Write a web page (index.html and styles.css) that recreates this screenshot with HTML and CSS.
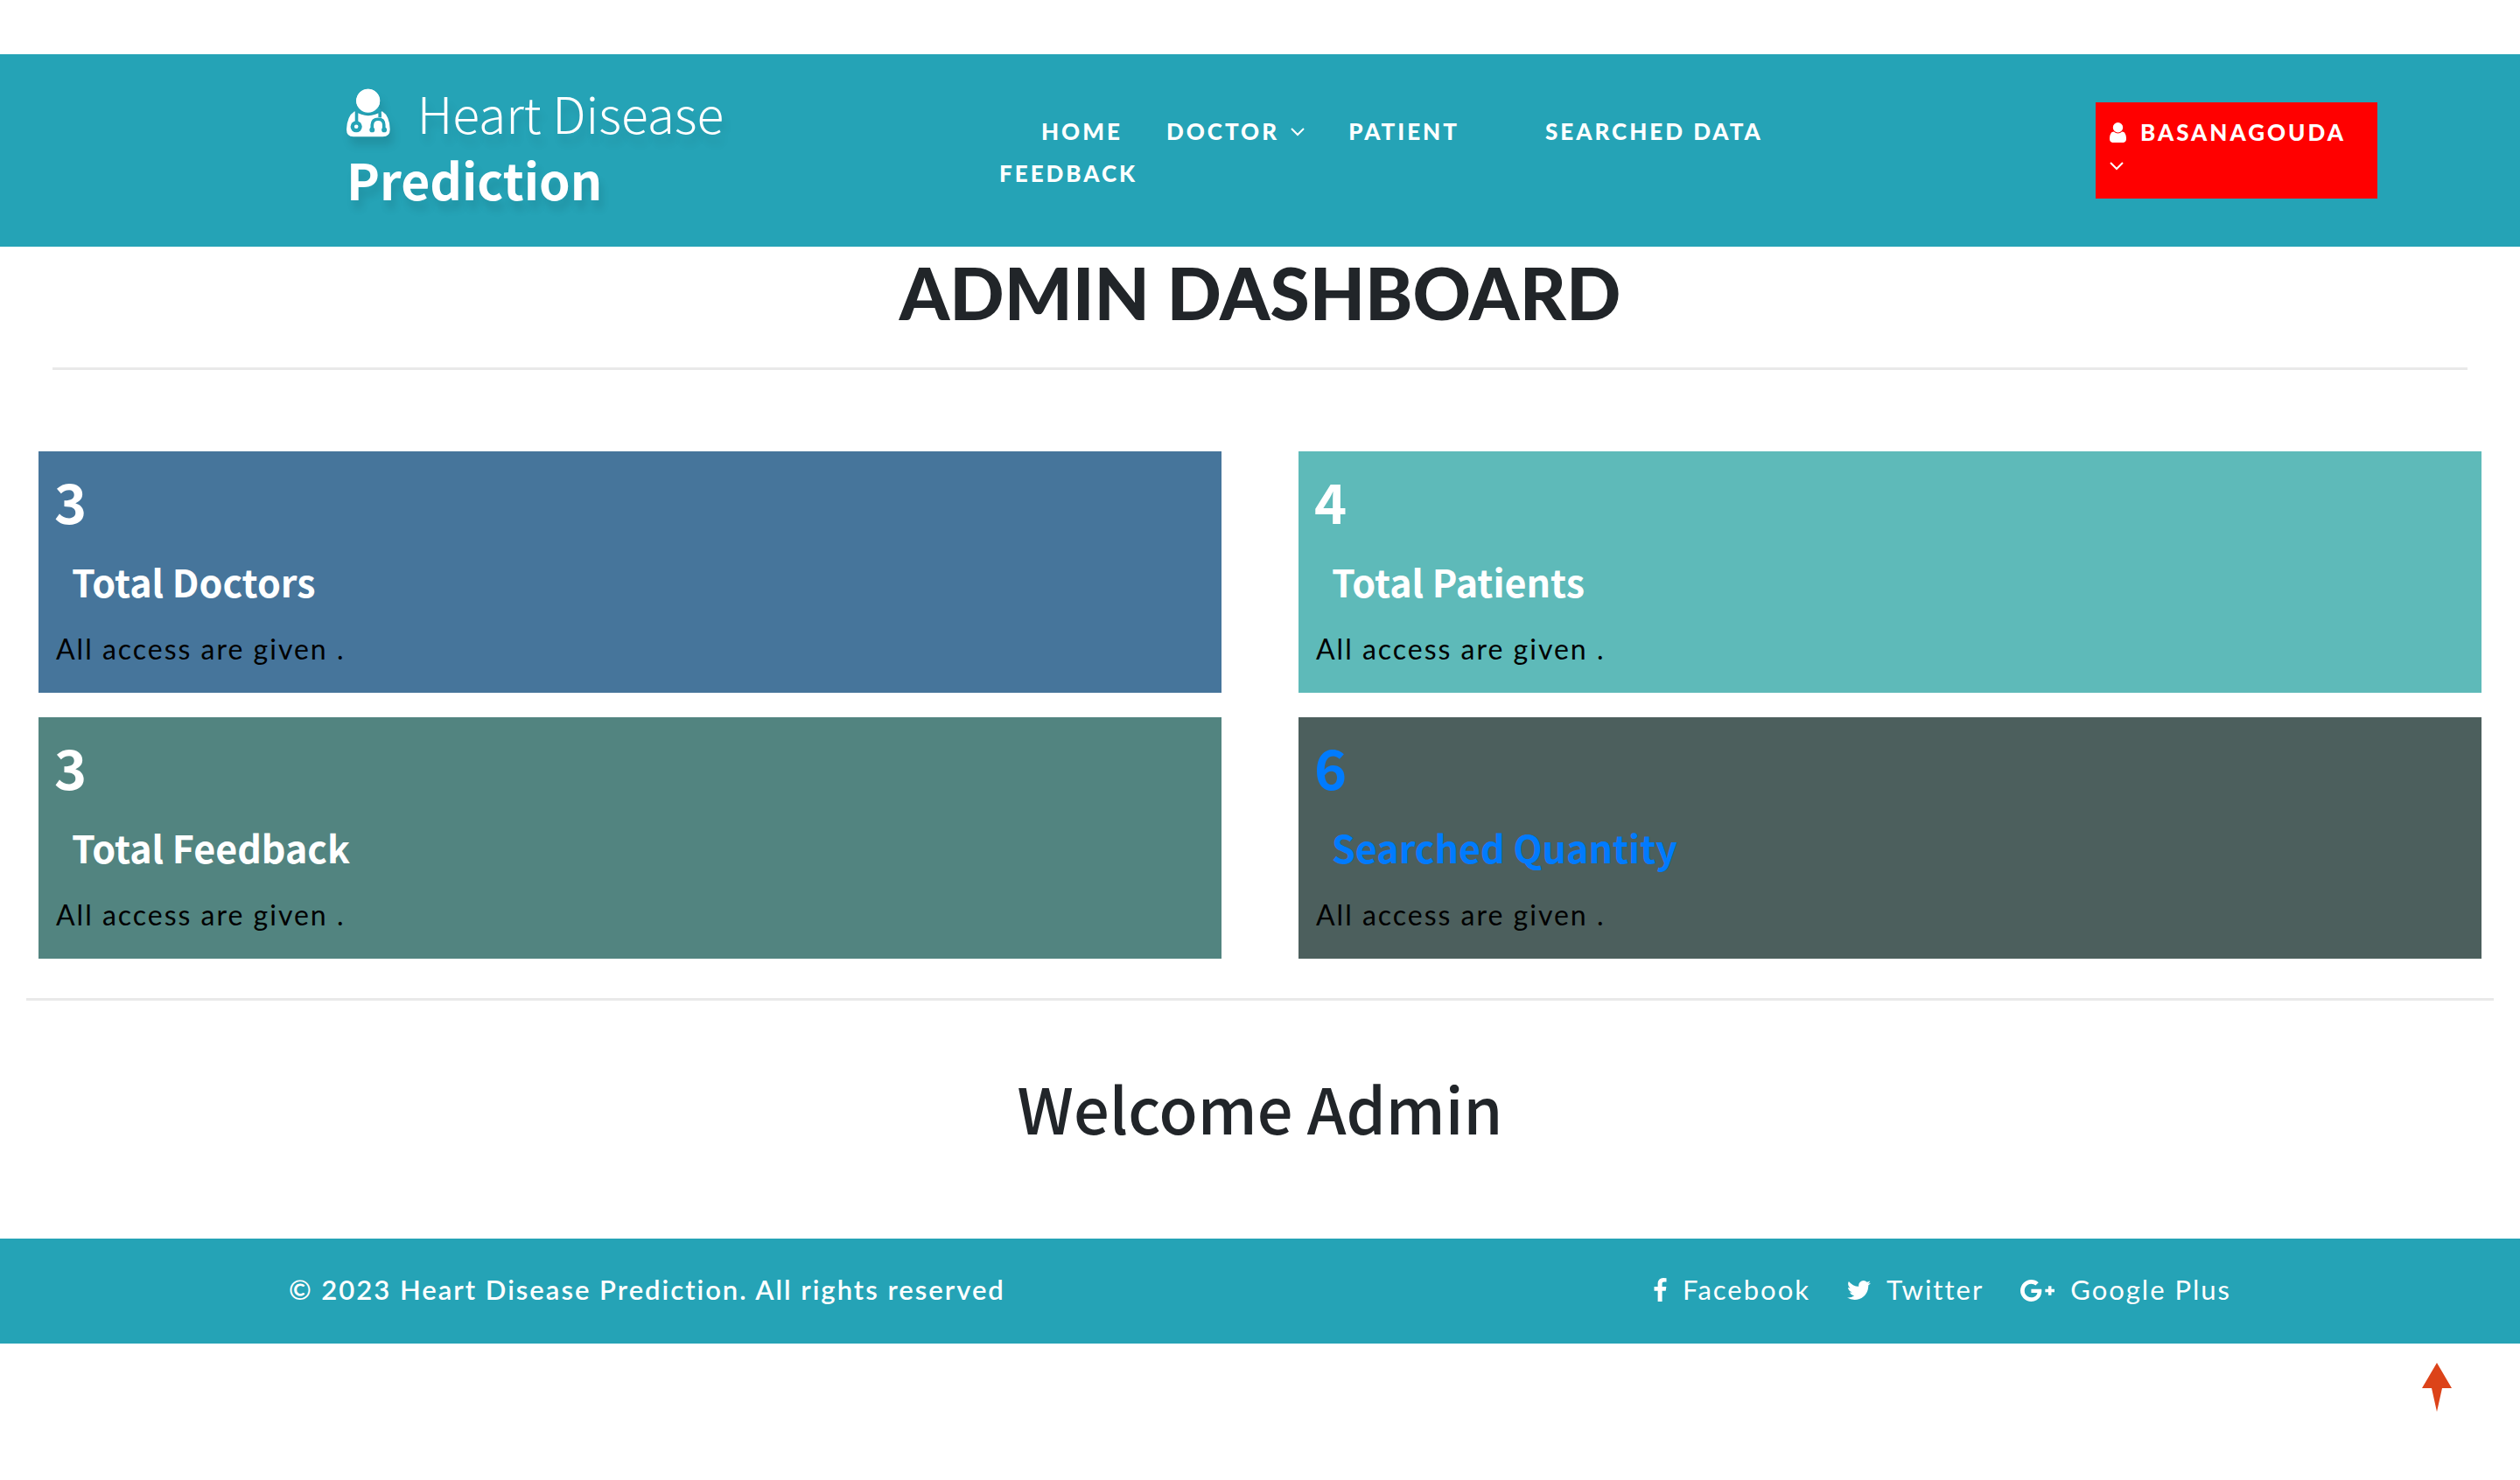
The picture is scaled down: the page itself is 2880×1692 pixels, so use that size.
FILE: index.html
```html
<!DOCTYPE html>
<html lang="en">
<head>
<meta charset="utf-8">
<meta name="viewport" content="width=device-width, initial-scale=1">
<title>Heart Disease Prediction - Admin</title>
<link rel="stylesheet" href="styles.css">
</head>
<body>
<header class="site-header">
  <a class="logo" href="#">
    <svg class="logo-icon" viewBox="0 0 152 168" aria-hidden="true">
      <circle cx="75" cy="42" r="41" fill="#fff"/>
      <path d="M28 79Q75 108 124 79Q150 95 151 142Q151 167 126 167H24Q0 167 0 142Q2 95 28 79Z" fill="#fff"/>
      <path d="M30 74Q75 106 121 74L108 60H42Z" fill="#25a3b6"/>
      <circle cx="75" cy="42" r="41" fill="#fff"/>
      <g fill="none" stroke="#25a3b6" stroke-width="11">
        <path d="M35 78V116M115 78Q117 92 116 100M89 142V126Q90 106 110 106Q130 106 130 126V142"/>
      </g>
      <g fill="#25a3b6"><circle cx="34" cy="132" r="20"/><circle cx="89" cy="143" r="9"/><circle cx="131" cy="143" r="9"/></g>
      <circle cx="34" cy="132" r="7" fill="#fff"/>
    </svg>
    <span class="logo-light">Heart Disease</span>
    <strong class="logo-bold">Prediction</strong>
  </a>
  <nav class="main-nav">
    <a class="nav-home" href="#">Home</a>
    <a class="nav-doctor" href="#">Doctor <svg class="chevron" viewBox="0 0 16 10" aria-hidden="true"><path d="M1 1l7 7 7-7"/></svg></a>
    <a class="nav-patient" href="#">Patient</a>
    <a href="#">Searched Data</a>
    <a href="#">Feedback</a>
  </nav>
  <button class="user-menu" type="button">
    <span class="user-name"><svg class="user-icon" viewBox="256 128 1280 1536" aria-hidden="true"><path d="M1536 1399q0 109-62.5 187t-150.5 78h-854q-88 0-150.5-78t-62.5-187q0-85 8.5-160.5t31.5-152 58.5-131 94-89 134.5-34.5q131 128 313 128t313-128q76 0 134.5 34.5t94 89 58.5 131 31.5 152 8.5 160.5zm-256-887q0 159-112.5 271.5t-271.5 112.5-271.5-112.5-112.5-271.5 112.5-271.5 271.5-112.5 271.5 112.5 112.5 271.5z"/></svg>Basanagouda</span>
    <svg class="chevron" viewBox="0 0 16 10" aria-hidden="true"><path d="M1 1l7 7 7-7"/></svg>
  </button>
</header>

<main>
  <h1 class="page-title">ADMIN DASHBOARD</h1>
  <hr class="rule rule-inset">
  <section class="cards">
    <article class="card card-doctors">
      <h2 class="card-count">3</h2>
      <h3 class="card-label">Total Doctors</h3>
      <p class="card-note">All access are given .</p>
    </article>
    <article class="card card-patients">
      <h2 class="card-count">4</h2>
      <h3 class="card-label">Total Patients</h3>
      <p class="card-note">All access are given .</p>
    </article>
    <article class="card card-feedback">
      <h2 class="card-count">3</h2>
      <h3 class="card-label">Total Feedback</h3>
      <p class="card-note">All access are given .</p>
    </article>
    <article class="card card-searched">
      <h2 class="card-count"><a href="#">6</a></h2>
      <h3 class="card-label"><a href="#">Searched Quantity</a></h3>
      <p class="card-note">All access are given .</p>
    </article>
  </section>
  <hr class="rule">
  <h2 class="welcome">Welcome Admin</h2>
</main>

<footer class="site-footer">
  <div class="footer-inner">
    <p class="copyright">© 2023 Heart Disease Prediction. All rights reserved</p>
    <div class="social">
      <a href="#"><svg class="icon-facebook" viewBox="479 0 864 1664" aria-hidden="true"><path d="M1343 12v264h-157q-86 0-116 36t-30 108v189h293l-39 296h-254v759h-306v-759h-255v-296h255v-218q0-186 104-288.5t277-102.5q147 0 228 12z"/></svg>Facebook</a>
      <a href="#"><svg class="icon-twitter" viewBox="108 256 1576 1280" aria-hidden="true"><path d="M1684 408q-67 98-162 167 1 14 1 42 0 130-38 259.5t-115.5 248.5-184.5 210.5-258 146-323 54.5q-271 0-496-145 35 4 78 4 225 0 401-138-105-2-188-64.5t-114-159.5q33 5 61 5 43 0 85-11-112-23-185.5-111.5t-73.5-205.5v-4q68 38 146 41-66-44-105-115t-39-154q0-88 44-163 121 149 294.5 238.5t371.5 99.5q-8-38-8-74 0-134 94.5-228.5t228.5-94.5q140 0 236 102 109-21 205-78-37 115-142 178 93-10 186-50z"/></svg>Twitter</a>
      <a href="#"><svg class="icon-google" viewBox="0 163 2304 1466" aria-hidden="true"><path d="M1437 913q0 208-87 370.5t-248 254-369 91.5q-149 0-285-58t-234-156-156-234-58-285 58-285 156-234 234-156 285-58q286 0 491 192l-199 191q-117-113-292-113-123 0-227.5 62t-165.5 168.5-61 232.5 61 232.5 165.5 168.5 227.5 62q83 0 152.5-23t114.5-57.5 78.5-78.5 49-83 21.5-74h-416v-252h692q12 63 12 122zm867-122v210h-209v209h-210v-209h-209v-210h209v-209h210v209h209z"/></svg>Google Plus</a>
    </div>
  </div>
</footer>
<a class="to-top" href="#" aria-label="Back to top"><svg viewBox="0 0 34 56" aria-hidden="true"><path d="M17 0L34 29H23L17 56L11 29H0Z"/></svg></a>
</body>
</html>
```
FILE: styles.css
```css
* { box-sizing: border-box; }

body {
  margin: 0;
  padding-top: 62px;
  background: #fff;
  color: #212529;
  font: 32px/48px Lato, sans-serif;
  letter-spacing: 2px;
}

h1, h2, h3, p { margin: 0; }
a { color: inherit; text-decoration: none; }
svg { fill: currentColor; }

.site-header {
  display: grid;
  grid-template-columns: 494fr 1001fr 322px;
  column-gap: 252px;
  align-items: start;
  min-height: 220px;
  padding: 28px 163px 30px 396px;
  background: #25a3b6;
  color: #fff;
}

.logo {
  font: 57px/76px "Noto Sans CJK SC", "Noto Sans", sans-serif;
  letter-spacing: 0;
  text-shadow: 4px 10px 10px rgba(0, 0, 0, .1);
}
.logo-icon {
  width: 50px;
  height: 56px;
  margin-right: 18px;
  vertical-align: -4px;
  filter: drop-shadow(4px 10px 5px rgba(0, 0, 0, .1));
}
.logo-light { font-weight: 300; }
.logo-bold { display: block; font-weight: 700; }

.main-nav {
  display: flex;
  flex-wrap: wrap;
  column-gap: 50px;
  padding-top: 36px;
  font-size: 26px;
  font-weight: 900;
  letter-spacing: 3px;
  text-transform: uppercase;
}
.nav-home { margin-left: 48px; }
.nav-patient { margin-right: 48px; }

.chevron {
  width: 16px;
  height: 10px;
  fill: none;
  stroke: currentColor;
  stroke-width: 2;
}
.main-nav .chevron { margin-left: 4px; vertical-align: 4px; }

.user-menu {
  display: flex;
  flex-direction: column;
  align-items: flex-start;
  height: 110px;
  margin-top: 27px;
  padding: 14px 16px;
  border: 0;
  background: #f00;
  color: #fff;
  font: 900 26px/40px Lato, sans-serif;
  letter-spacing: 3px;
  text-transform: uppercase;
}
.user-icon {
  width: 19px;
  height: 23px;
  margin-right: 16px;
  vertical-align: -2px;
}
.user-menu .chevron { margin-top: 14px; }

.page-title {
  padding-top: 4px;
  font-size: 82px;
  font-weight: 900;
  line-height: 96px;
  letter-spacing: 0;
  text-align: center;
}

.rule {
  height: 3px;
  margin: 45px 30px 0;
  border: 0;
  background: #e9e9e9;
}
.rule-inset { margin: 38px 60px 0; }

.cards {
  display: grid;
  grid-template-columns: 1fr 1fr;
  gap: 28px 88px;
  margin: 93px 44px 0;
}
.card {
  min-height: 276px;
  padding: 16px 18px;
  color: #fff;
}
.card-doctors { background: #46759b; }
.card-patients { background: #5ebab9; }
.card-feedback { background: #528480; }
.card-searched { background: #4c5f5d; }
.card-searched a { color: #007bff; }

.card-count, .card-label, .welcome {
  font-family: "Noto Sans CJK SC", "Noto Sans", sans-serif;
  letter-spacing: 0;
}
.card-count { font-size: 63px; line-height: 80px; }
.card-label { padding: 22px 20px 0; font-size: 43px; line-height: 60px; }
.card-note { margin-top: 24px; padding-left: 2px; color: #000; }

.welcome {
  padding: 72px 0 100px;
  font-size: 72px;
  font-weight: 500;
  line-height: 100px;
  text-align: center;
}

.site-footer {
  padding: 34px 0 38px;
  background: #25a3b6;
  color: #fff;
}
.footer-inner {
  display: flex;
  justify-content: space-between;
  max-width: 2280px;
  margin: 0 auto;
  padding: 0 30px;
  font-size: 31px;
}
.copyright { font-weight: 600; }
.social { display: flex; gap: 42px; }
.social svg { margin-right: 18px; }
.icon-facebook { width: 15px; height: 27px; vertical-align: -2px; }
.icon-twitter { width: 27px; height: 22px; }
.icon-google { width: 39px; height: 25px; vertical-align: -2px; }

.to-top {
  position: fixed;
  right: 78px;
  bottom: 78px;
  width: 34px;
  height: 56px;
  color: #dc4319;
}
.to-top svg { display: block; }
```
